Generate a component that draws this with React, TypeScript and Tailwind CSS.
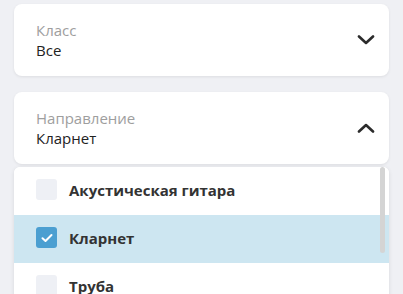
import React from "react";

const items = [
  { name: "Акустическая гитара", checked: false },
  { name: "Кларнет", checked: true },
  { name: "Труба", checked: false },
  { name: "Скрипка", checked: false },
];

function Chevron({ up }: { up?: boolean }) {
  return (
    <svg width="18" height="10" viewBox="0 0 18 10" fill="none">
      <path
        d={up ? "M2 8.5 L9 2 L16 8.5" : "M2 1.5 L9 8 L16 1.5"}
        stroke="#2b2b2b"
        strokeWidth="2.6"
        strokeLinecap="round"
        strokeLinejoin="round"
      />
    </svg>
  );
}

function SelectCard({ label, value, open }: { label: string; value: string; open?: boolean }) {
  return (
    <div className="flex h-[72px] items-center justify-between rounded-lg bg-white pl-[22px] pr-[14px] shadow-[0_1px_3px_rgba(0,0,0,0.08)]">
      <div className="flex flex-col">
        <span className="text-[15px] leading-5 text-[#9e9e9e]">{label}</span>
        <span className="text-[15px] leading-5 text-[#222]">{value}</span>
      </div>
      <Chevron up={open} />
    </div>
  );
}

export default function App() {
  return (
    <div
      className="h-[294px] w-[403px] overflow-hidden bg-[#eff0f4] px-[14px] pt-1"
      style={{ fontFamily: '"Open Sans", "Noto Sans", sans-serif' }}
    >
      <SelectCard label="Класс" value="Все" />
      <div className="mt-4">
        <SelectCard label="Направление" value="Кларнет" open />
      </div>

      {/* Dropdown list */}
      <div className="relative mt-[3px] overflow-hidden rounded-t-md bg-white shadow-[0_1px_4px_rgba(0,0,0,0.1)]">
        {items.map((item) => (
          <div
            key={item.name}
            className={`flex h-12 items-center gap-3 pb-[3px] pl-[22px] ${item.checked ? "bg-[#cde6f1]" : "bg-white"}`}
          >
            {item.checked ? (
              <div className="flex h-[21px] w-[21px] items-center justify-center rounded-[3px] bg-[#4b9fd1]">
                <svg width="12" height="10" viewBox="0 0 12 10" fill="none">
                  <path d="M1.5 5.2 L4.5 8 L10.5 2" stroke="white" strokeWidth="2" strokeLinecap="round" strokeLinejoin="round" />
                </svg>
              </div>
            ) : (
              <div className="h-[21px] w-[21px] rounded-[3px] bg-[#eef0f5]" />
            )}
            <span className="text-[15px] font-bold leading-5 text-[#333]">{item.name}</span>
          </div>
        ))}
        <div className="absolute right-1 top-0 h-[86px] w-[5px] rounded-full bg-[#d4d4d4]" />
      </div>
    </div>
  );
}
